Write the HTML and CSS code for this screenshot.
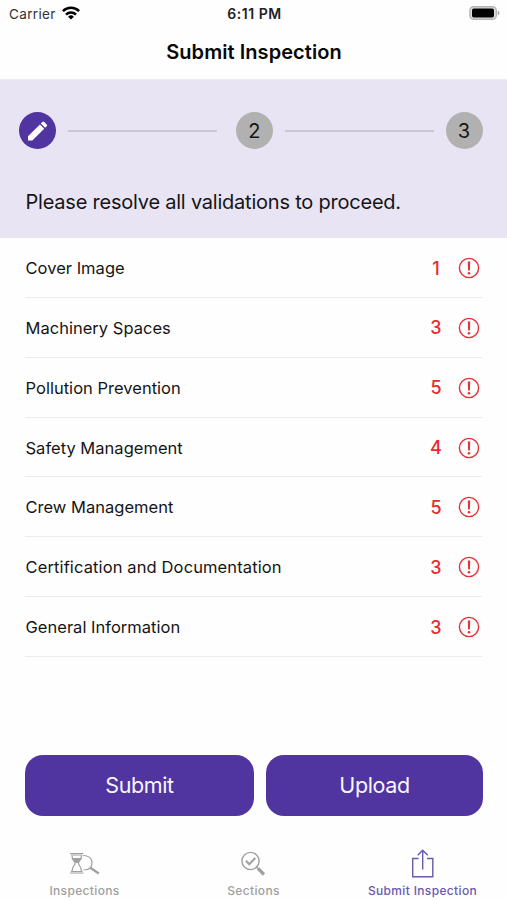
FILE: index.html
```html
<!DOCTYPE html>
<html lang="en">
<head>
<meta charset="utf-8">
<title>Submit Inspection</title>
<link rel="stylesheet" href="styles.css">
</head>
<body>
<svg class="defs" width="0" height="0" aria-hidden="true">
  <symbol id="alert" viewBox="0 0 22 22"><circle cx="11" cy="11" r="9.6" fill="none" stroke="currentColor" stroke-width="1.4"/><path d="M9.800 4.600h2.400l-.3 9h-1.800z" fill="currentColor"/><circle cx="11" cy="16.300" r="1.300" fill="currentColor"/></symbol>
</svg>
<header>
  <div class="status">
    <div class="carrier"><span>Carrier</span>
      <svg width="18" height="14" viewBox="0 0 18 14" fill="none" stroke="#000" stroke-width="2.5"><path d="M.9 5.200a11.500 11.500 0 0 1 16.200 0M4 8.600a7.100 7.100 0 0 1 10 0"/><path d="M9 13.600 6.100 10.700a4.100 4.100 0 0 1 5.800 0z" fill="#000" stroke="none"/></svg>
    </div>
    <time>6:11 PM</time>
    <svg class="battery" width="31" height="14" viewBox="0 0 31 14"><rect x=".9" y=".7" width="26.400" height="12.600" rx="3.800" fill="#ddd" stroke="#b4b4b4" stroke-width="1.400"/><rect x="3" y="2.500" width="22" height="9" rx="1.700"/><path d="M28.700 4.500q1.800.9 1.800 2.500t-1.800 2.500z" fill="#aaa"/></svg>
  </div>
  <h1>Submit Inspection</h1>
</header>
<section class="progress">
  <div class="steps">
    <div class="step active"><svg width="22" height="22" viewBox="0 0 22 22" fill="#fff"><path d="M1 16.300 12.900 4.400l4.300 4.300L5.300 20.600H1zM13.800 3.500l1.600-1.600q.9-.9 1.800 0L19.700 4.400q.9.9 0 1.800l-1.600 1.600z"/></svg></div>
    <i class="line"></i><div class="step">2</div><i class="line second"></i><div class="step">3</div>
  </div>
  <p>Please resolve all validations to proceed.</p>
</section>
<ul>
  <li><span>Cover Image</span><b>1</b><svg><use href="#alert"/></svg></li>
  <li><span>Machinery Spaces</span><b>3</b><svg><use href="#alert"/></svg></li>
  <li><span>Pollution Prevention</span><b>5</b><svg><use href="#alert"/></svg></li>
  <li><span>Safety Management</span><b>4</b><svg><use href="#alert"/></svg></li>
  <li><span>Crew Management</span><b>5</b><svg><use href="#alert"/></svg></li>
  <li><span class="long">Certification and Documentation</span><b>3</b><svg><use href="#alert"/></svg></li>
  <li><span>General Information</span><b>3</b><svg><use href="#alert"/></svg></li>
</ul>
<div class="actions"><button>Submit</button><button>Upload</button></div>
<nav>
  <a><svg width="32" height="32" viewBox="0 0 32 32" fill="none" stroke="currentColor" stroke-width="1.200"><path d="M1 6.500h13.500M1 26h13.500M2 8h11.500M2 24.500h11.500" stroke-width="1"/><path d="M3 8.500c0 5 3 5.500 3 7.700s-3 3-3 8.300M12.500 8.500c0 5-3 5.500-3 7.700s3 3 3 8.300M14 8.500c5.500 0 9 3 9 7.500s-3.500 7-8.500 7"/><path d="M3.500 11.500h8.500L8.500 15.500h-1.500z" fill="currentColor"/><path d="m21 20.500 8.800 6" stroke-width="2.300"/></svg><span>Inspections</span></a>
  <a><svg width="32" height="32" viewBox="0 0 32 32" fill="none" stroke="currentColor" stroke-width="1.400"><circle cx="12.500" cy="14" r="8.600"/><path d="m8 13.800 3.300 3.500 6-6.300" stroke-width="2"/><path d="m18.500 20 2.200 2.200"/><path d="m20 21.500 6 6" stroke-width="3.200"/></svg><span>Sections</span></a>
  <a class="current"><svg width="32" height="32" viewBox="0 0 32 32" fill="none" stroke="currentColor" stroke-width="1.400"><path d="M11.500 11.500H5.700v18.300h20.100V11.500h-5.800M15.700 22.500V3.300M10.700 8.200l5-5 5 5"/></svg><span>Submit Inspection</span></a>
</nav>
</body>
</html>
```
FILE: styles.css
```css
* { box-sizing: border-box; }
body { margin: 0; width: 507px; height: 900px; overflow: hidden; display: flex; flex-direction: column; background: #fefefe; color: #151515; font-family: Inter, "Liberation Sans", sans-serif; }
.defs { position: absolute; }
svg { display: block; flex: none; }
header { height: 80px; border-bottom: 1px solid #ececee; }
.status { display: grid; grid-template-columns: 1fr auto 1fr; align-items: center; height: 27px; padding: 0 7px 0 9px; font-size: 13.5px; }
.carrier { display: flex; align-items: center; gap: 6px; color: #333; letter-spacing: .35px; }
.carrier span { width: 47px; }
.carrier svg { margin: -2px 0 0; }
time { font-weight: 600; color: #222; font-size: 14px; letter-spacing: .55px; }
.battery { justify-self: end; margin-top: -1px; }
h1 { margin: 11px 0 0 1px; font-size: 20px; line-height: 28px; font-weight: 600; letter-spacing: .06px; text-align: center; color: #080808; }
.progress { height: 158px; padding: 32px 24.5px 0 19px; background: #e9e4f4; }
.steps { display: flex; align-items: center; height: 37px; }
.step { width: 37px; height: 37px; flex: none; border-radius: 50%; background: #b1b1b1; display: flex; align-items: center; justify-content: center; font-size: 20px; }
.active { background: #5035a0; }
.line { height: 2px; flex: 1; margin: 0 19px 0 12px; background: #cbc5d6; }
.line.second { margin: 0 12px; }
p { margin: 39px 0 0 6.5px; font-size: 20px; line-height: 28px; letter-spacing: -.22px; white-space: nowrap; }
ul { list-style: none; margin: 0 25px; padding: 0; }
li { height: 59.86px; padding-top: 1.2px; display: flex; align-items: center; border-bottom: 1px solid #ececec; font-size: 16.5px; }
li span { flex: 1; padding-left: .5px; letter-spacing: .02px; white-space: nowrap; }
li .long { letter-spacing: .12px; }
li b { width: 20px; text-align: center; font-size: 18px; font-weight: 500; color: #ec2830; }
li svg { width: 22px; height: 22px; margin: 0 2px 0 12px; color: #e53338; }
.actions { display: grid; grid-template-columns: 229px 217px; gap: 12px; margin: 98px 25px 0; }
button { height: 61px; padding: 0 0 2px; border: 0; border-radius: 18px; background: #5035a0; color: #f8f5ff; font: 400 21.5px Inter, sans-serif; letter-spacing: -.4px; }
nav { display: grid; grid-template-columns: repeat(3, 1fr); margin-top: 31px; color: #a0a0a0; }
nav a { display: flex; flex-direction: column; align-items: center; font-size: 12px; font-weight: 500; line-height: 16px; letter-spacing: .35px; gap: 4px; white-space: nowrap; }
.current { color: #6a59ac; }
```
